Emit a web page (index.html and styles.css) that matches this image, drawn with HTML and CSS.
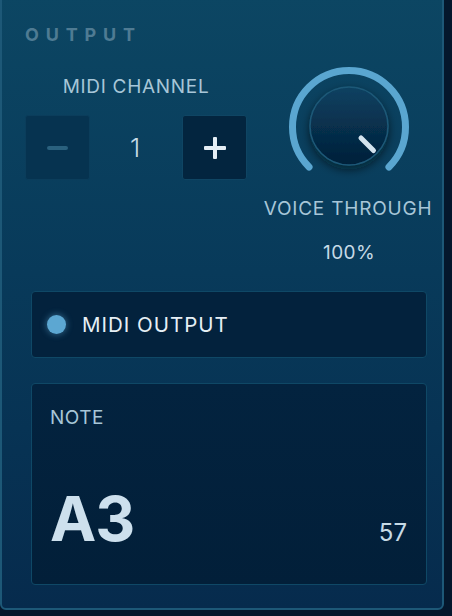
FILE: index.html
```html
<!DOCTYPE html>
<html>
<head>
<meta charset="utf-8">
<link rel="stylesheet" href="styles.css">
</head>
<body>
<div class="panel">
  <div class="title">OUTPUT</div>
  <div class="top">
    <div class="channel">
      <div class="label">MIDI CHANNEL</div>
      <div class="stepper">
        <div class="btn btn-minus"><span class="minus"></span></div>
        <div class="value">1</div>
        <div class="btn btn-plus"><span class="plus"></span></div>
      </div>
    </div>
    <div class="voice">
      <svg class="knob" width="130" height="130" viewBox="0 0 130 130">
        <defs>
          <linearGradient id="kg" x1="0" y1="0" x2="0" y2="1">
            <stop offset="0" stop-color="#0c4161"/>
            <stop offset="1" stop-color="#021f39"/>
          </linearGradient>
          <filter id="ks" x="-40%" y="-40%" width="180%" height="180%">
            <feDropShadow dx="0" dy="4" stdDeviation="5" flood-color="#000814" flood-opacity="0.6"/>
          </filter>
        </defs>
        <path d="M 25.05 104.95 A 56.5 56.5 0 1 1 104.95 104.95" fill="none" stroke="#5aa6d0" stroke-width="7" stroke-linecap="round"/>
        <circle cx="65" cy="64" r="39" fill="url(#kg)" stroke="#1d5877" stroke-width="1.5" filter="url(#ks)"/>
        <line x1="77" y1="76" x2="89.5" y2="88.5" stroke="#d3e3ee" stroke-width="5" stroke-linecap="round"/>
      </svg>
      <div class="label vlabel">VOICE THROUGH</div>
      <div class="pct">100%</div>
    </div>
  </div>
  <div class="outbox">
    <span class="led"></span>
    <span class="outlabel">MIDI OUTPUT</span>
  </div>
  <div class="notebox">
    <div class="notelabel">NOTE</div>
    <div class="noterow">
      <span class="note">A3</span>
      <span class="num">57</span>
    </div>
  </div>
</div>
</body>
</html>
```
FILE: styles.css
```css
html, body {
  margin: 0;
  padding: 0;
  background: #04172c;
  width: 452px;
  height: 616px;
  overflow: hidden;
}
body {
  font-family: Inter, Roboto, "Noto Sans", sans-serif;
}
.panel {
  box-sizing: border-box;
  width: 444px;
  height: 616px;
  margin-top: -6px;
  border: 2px solid #1d5877;
  border-radius: 0 0 6px 6px;
  background: linear-gradient(180deg, #0c4663 0%, #083a5a 45%, #062b4d 100%);
  padding: 0;
}
.title {
  margin: 27px 0 0 23px;
  height: 24px;
  line-height: 24px;
  font-size: 18px;
  font-weight: 700;
  letter-spacing: 6.8px;
  color: #4f7b93;
}
.top {
  display: flex;
  height: 232px;
}
.channel {
  width: 222px;
  margin-left: 23px;
  display: flex;
  flex-direction: column;
  align-items: center;
}
.label {
  font-size: 19px;
  color: #a7c6d8;
  line-height: 24px;
  height: 24px;
  letter-spacing: 0.7px;
  white-space: nowrap;
}
.channel .label {
  margin-top: 28px;
}
.stepper {
  margin-top: 16px;
  width: 222px;
  display: flex;
  align-items: center;
  justify-content: space-between;
}
.btn {
  box-sizing: border-box;
  width: 65px;
  height: 65px;
  border-radius: 3px;
  display: flex;
  align-items: center;
  justify-content: center;
}
.btn-minus {
  background: #063350;
  border: 1px solid #0b3d5b;
}
.btn-plus {
  background: #03253f;
  border: 1px solid #0f4563;
}
.minus {
  width: 21px;
  height: 4px;
  border-radius: 2px;
  background: #2a617e;
}
.plus {
  position: relative;
  width: 22px;
  height: 22px;
}
.plus::before, .plus::after {
  content: "";
  position: absolute;
  background: #e4eef5;
  border-radius: 1px;
}
.plus::before {
  left: 0; top: 9px; width: 22px; height: 4px;
}
.plus::after {
  left: 9px; top: 0; width: 4px; height: 22px;
}
.value {
  font-size: 26px;
  font-weight: 300;
  color: #c6dae6;
  width: 40px;
  text-align: center;
  margin-right: 2px;
}
.voice {
  width: 190px;
  margin-left: 9px;
  display: flex;
  flex-direction: column;
  align-items: center;
}
.knob {
  display: block;
  margin-top: 15px;
}
.vlabel {
  margin-top: 5px;
  font-size: 19px;
  letter-spacing: 0.8px;
  margin-left: -2px;
}
.pct {
  margin-top: 20px;
  font-size: 19px;
  color: #c6dae6;
  line-height: 24px;
  letter-spacing: 0.4px;
}
.outbox {
  box-sizing: border-box;
  margin: 12px 0 0 29px;
  width: 396px;
  height: 67px;
  background: #03223d;
  border: 1.5px solid #0f4866;
  border-radius: 4px;
  display: flex;
  align-items: center;
  padding-left: 15px;
}
.led {
  width: 19px;
  height: 19px;
  border-radius: 50%;
  background: #5ca7d2;
  box-shadow: 0 0 6px 1px rgba(90, 167, 210, 0.45);
}
.outlabel {
  margin-left: 16px;
  font-size: 20.5px;
  color: #e6eff5;
  font-weight: 400;
  letter-spacing: 1px;
}
.notebox {
  box-sizing: border-box;
  margin: 25px 0 0 29px;
  width: 396px;
  height: 202px;
  background: linear-gradient(180deg, #03233f 0%, #021f39 100%);
  border: 1.5px solid #0f4866;
  border-radius: 4px;
  padding: 22px 19px 0 18px;
}
.notelabel {
  font-size: 19px;
  color: #a7c6d8;
  line-height: 24px;
  letter-spacing: 0.5px;
}
.noterow {
  margin-top: 54px;
  display: flex;
  align-items: baseline;
  justify-content: space-between;
}
.note {
  font-size: 62px;
  font-weight: 700;
  color: #cde0ed;
  line-height: 70px;
  letter-spacing: -1px;
}
.num {
  font-size: 24px;
  color: #c6dae6;
}
```
